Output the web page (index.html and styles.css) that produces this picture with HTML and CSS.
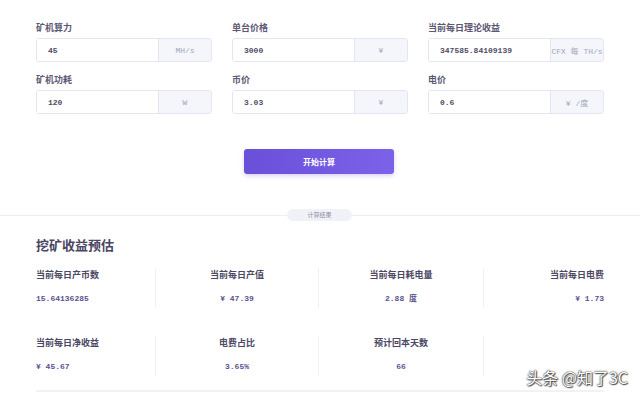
FILE: index.html
```html
<!DOCTYPE html>
<html lang="zh-CN">
<head>
  <meta charset="UTF-8">
  <meta name="viewport" content="width=device-width, initial-scale=1.0">
  <title>挖矿收益计算器</title>
  <link rel="stylesheet" href="styles.css">
</head>
<body>
  <!-- Calculator form -->
  <div class="calc">
    <div class="form-grid">
      <div class="field">
        <label class="field-label">矿机算力</label>
        <div class="input-group">
          <input type="text" value="45">
          <span class="addon">MH/s</span>
        </div>
      </div>
      <div class="field">
        <label class="field-label">单台价格</label>
        <div class="input-group">
          <input type="text" value="3000">
          <span class="addon">¥</span>
        </div>
      </div>
      <div class="field">
        <label class="field-label">当前每日理论收益</label>
        <div class="input-group">
          <input type="text" value="347585.84109139">
          <span class="addon">CFX 每 TH/s</span>
        </div>
      </div>
      <div class="field">
        <label class="field-label">矿机功耗</label>
        <div class="input-group">
          <input type="text" value="120">
          <span class="addon">W</span>
        </div>
      </div>
      <div class="field">
        <label class="field-label">币价</label>
        <div class="input-group">
          <input type="text" value="3.03">
          <span class="addon">¥</span>
        </div>
      </div>
      <div class="field">
        <label class="field-label">电价</label>
        <div class="input-group">
          <input type="text" value="0.6">
          <span class="addon">¥ /度</span>
        </div>
      </div>
    </div>

    <div class="actions">
      <button class="btn-calc">开始计算</button>
    </div>
  </div>

  <!-- Divider -->
  <div class="divider"><span>计算结果</span></div>

  <!-- Results -->
  <section class="results">
    <h2>挖矿收益预估</h2>
    <div class="stats">
      <div class="stat">
        <div class="stat-label">当前每日产币数</div>
        <div class="stat-value">15.64136285</div>
      </div>
      <div class="stat">
        <div class="stat-label">当前每日产值</div>
        <div class="stat-value">¥ 47.39</div>
      </div>
      <div class="stat">
        <div class="stat-label">当前每日耗电量</div>
        <div class="stat-value">2.88 度</div>
      </div>
      <div class="stat">
        <div class="stat-label">当前每日电费</div>
        <div class="stat-value">¥ 1.73</div>
      </div>
    </div>
    <div class="stats">
      <div class="stat">
        <div class="stat-label">当前每日净收益</div>
        <div class="stat-value">¥ 45.67</div>
      </div>
      <div class="stat">
        <div class="stat-label">电费占比</div>
        <div class="stat-value">3.65%</div>
      </div>
      <div class="stat">
        <div class="stat-label">预计回本天数</div>
        <div class="stat-value">66</div>
      </div>
      <div class="stat"></div>
    </div>
  </section>

  <div class="watermark">头条 @知了3C</div>
</body>
</html>
```

FILE: styles.css
```css
/* Styles */
body {
  margin: 0;
  background: #ffffff;
  color: #4b4662;
  font-family: "Noto Sans CJK SC", "Noto Sans", sans-serif;
  overflow: hidden;
}

.calc {
  padding: 22px 36px 0;
}

.form-grid {
  display: grid;
  grid-template-columns: repeat(3, 176px);
  column-gap: 20px;
  row-gap: 12px;
}

.field-label {
  display: block;
  height: 12px;
  line-height: 12px;
  margin-bottom: 4px;
  font-size: 9px;
  font-weight: 700;
  color: #5d5872;
}

.input-group {
  display: flex;
  height: 24px;
  border: 1px solid #e3e6f0;
  border-radius: 3px;
  box-sizing: border-box;
  overflow: hidden;
}

.input-group input {
  flex: 1;
  min-width: 0;
  border: none;
  padding: 0 0 0 11px;
  font-family: "Liberation Mono", monospace;
  font-size: 8px;
  font-weight: 700;
  color: #4f4b63;
  background: #ffffff;
  outline: none;
}

.addon {
  width: 52px;
  display: flex;
  align-items: center;
  justify-content: center;
  background: #f4f6fb;
  border-left: 1px solid #e3e6f0;
  font-family: "Liberation Mono", "Noto Sans CJK SC", monospace;
  font-size: 8px;
  color: #a3a6ba;
  white-space: nowrap;
}

.actions {
  display: flex;
  justify-content: center;
  margin-top: 35px;
}

.btn-calc {
  width: 150px;
  height: 25px;
  margin-left: -2px;
  border: none;
  border-radius: 3px;
  background: linear-gradient(90deg, #6a4fd9, #7c62e8);
  box-shadow: 0 2px 4px rgba(106, 79, 217, 0.25);
  color: #ffffff;
  font-family: "Noto Sans CJK SC", sans-serif;
  font-size: 8px;
  font-weight: 700;
  cursor: pointer;
}

/* Divider */
.divider {
  position: relative;
  display: flex;
  justify-content: center;
  height: 12px;
  margin-top: 35px;
}

.divider::before {
  content: "";
  position: absolute;
  left: 0;
  right: 0;
  top: 6px;
  border-top: 1px solid #eceef4;
}

.divider span {
  position: relative;
  width: 65px;
  margin-left: -1px;
  border-radius: 6px;
  background: #f1f2f7;
  font-size: 6px;
  line-height: 12px;
  text-align: center;
  color: #8f90a6;
}

/* Results */
.results {
  margin: 0 36px;
  padding-bottom: 14px;
  border-bottom: 2px solid #f1f2f6;
}

.results h2 {
  margin: 15px 0 14px;
  font-size: 13px;
  line-height: 18px;
  font-weight: 700;
  color: #4a4562;
}

.stats {
  display: grid;
  grid-template-columns: 119fr 163fr 165fr 121fr;
  margin-bottom: 28px;
}

.stats:last-child {
  margin-bottom: 0;
}

.stat {
  padding: 0 0 2px;
  text-align: center;
  border-left: 1px solid #f0f1f5;
}

.stat:first-child {
  text-align: left;
  border-left: none;
}

.stat:last-child {
  text-align: right;
}

.stats:last-child .stat:last-child {
  border-left: 1px solid #f0f1f5;
}

.stat-label {
  line-height: 14px;
  font-size: 9px;
  font-weight: 700;
  color: #4d4864;
}

.stat-value {
  margin-top: 10px;
  line-height: 14px;
  font-family: "Liberation Mono", "Noto Sans CJK SC", monospace;
  font-size: 8px;
  font-weight: 700;
  color: #5a5290;
}

.watermark {
  position: absolute;
  right: 12px;
  top: 365px;
  font-family: "Noto Sans CJK SC", sans-serif;
  font-size: 16px;
  color: #ffffff;
  text-shadow: 0 0 2px #333, 0 0 1px #333, 1px 1px 1px #555;
}
```
